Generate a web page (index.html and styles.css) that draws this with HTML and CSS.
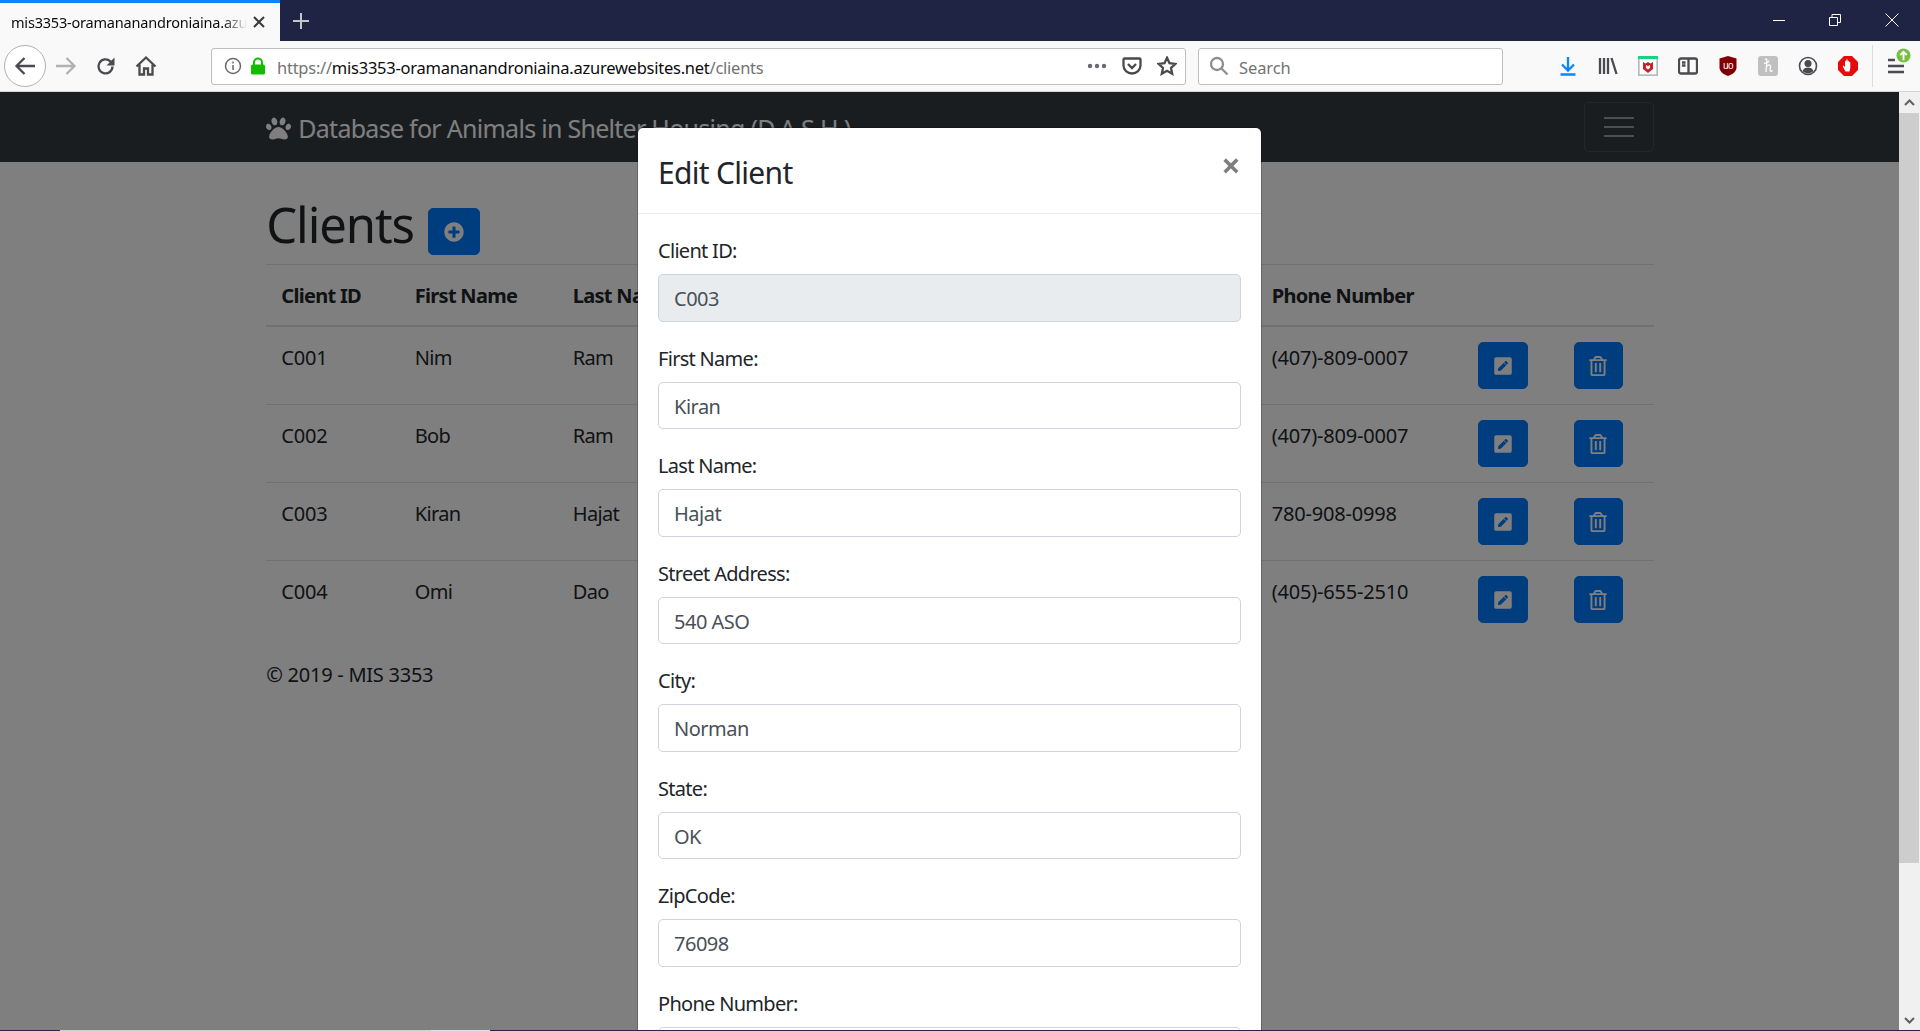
FILE: index.html
```html
<!DOCTYPE html>
<html>
    <head>
        <title>Clients - D.A.S.H.</title>
        <meta name="viewport" content="width=device-width, initial-scale=1">
        <link rel="stylesheet" href="styles.css">
    </head>
    <body>
        <svg class="defs" width="0" height="0">
            <symbol id="i-edit" viewBox="0 0 448 512"><path d="M400 480H48c-26.5 0-48-21.5-48-48V80c0-26.5 21.5-48 48-48h352c26.5 0 48 21.5 48 48v352c0 26.5-21.5 48-48 48zM238.1 177.9L102.4 313.6l-6.3 57.1c-.8 7.6 5.6 14.1 13.3 13.3l57.1-6.3L302.2 242c2.3-2.3 2.3-6.1 0-8.5L246.7 178c-2.5-2.4-6.3-2.4-8.6-.1zM345 165.1L314.9 135c-9.4-9.4-24.6-9.4-33.9 0l-23.1 23.1c-2.3 2.3-2.3 6.1 0 8.5l55.5 55.5c2.3 2.3 6.1 2.3 8.5 0L345 199c9.3-9.3 9.3-24.5 0-33.9z"/></symbol>
            <symbol id="i-trash" viewBox="0 0 448 512"><path d="M268 416h24a12 12 0 0 0 12-12V188a12 12 0 0 0-12-12h-24a12 12 0 0 0-12 12v216a12 12 0 0 0 12 12zM432 80h-82.41l-34-56.7A48 48 0 0 0 274.41 0H173.59a48 48 0 0 0-41.16 23.3L98.41 80H16A16 16 0 0 0 0 96v16a16 16 0 0 0 16 16h16v336a48 48 0 0 0 48 48h288a48 48 0 0 0 48-48V128h16a16 16 0 0 0 16-16V96a16 16 0 0 0-16-16zM171.84 50.91A6 6 0 0 1 177 48h94a6 6 0 0 1 5.15 2.91L293.61 80H154.39zM368 464H80V128h288zm-212-48h24a12 12 0 0 0 12-12V188a12 12 0 0 0-12-12h-24a12 12 0 0 0-12 12v216a12 12 0 0 0 12 12z"/></symbol>
        </svg>

        <div class="tabbar">
            <div class="tab">
                <span class="tab-title">mis3353-oramananandroniaina.azur</span>
                <svg class="tab-close" width="14" height="14" viewBox="0 0 14 14"><path d="M2 2l10 10M12 2L2 12"/></svg>
            </div>
            <div class="new-tab">
                <svg width="18" height="18" viewBox="0 0 18 18"><path d="M9 1v16M1 9h16"/></svg>
            </div>
            <div class="win-controls">
                <div class="win-btn"><svg width="14" height="14" viewBox="0 0 14 14"><path d="M1 7.5h12"/></svg></div>
                <div class="win-btn"><svg width="14" height="14" viewBox="0 0 14 14"><path d="M1.5 4.5h8v8h-8zM4 4.5v-3h8.5v8h-3"/></svg></div>
                <div class="win-btn"><svg width="14" height="14" viewBox="0 0 14 14"><path d="M.5.5l13 13M13.500.5l-13 13"/></svg></div>
            </div>
        </div>

        <div class="toolbar">
            <div class="back-btn">
                <svg width="22" height="22" viewBox="0 0 22 22"><path d="M21 11H2.500M10.500 3l-8 8 8 8"/></svg>
            </div>
            <div class="tool-slot forward">
                <svg width="22" height="22" viewBox="0 0 22 22"><path d="M1 11h18.500M11.500 3l8 8-8 8"/></svg>
            </div>
            <div class="tool-slot">
                <svg width="20" height="20" viewBox="0 0 20 20"><path d="M16.500 10.500a7 7 0 1 1-2.200-5.200l2.500 2.500"/><path class="solid" d="M18.500 1.500v8h-8z"/></svg>
            </div>
            <div class="tool-slot">
                <svg width="22" height="22" viewBox="0 0 22 22"><path d="M1.500 11.500L11 2.500l9.500 9M4.500 9.500v10h4.500v-6h4v6h4.500v-10"/></svg>
            </div>

            <div class="url-bar">
                <svg class="url-info" width="18" height="18" viewBox="0 0 18 18"><circle cx="9" cy="9" r="7.500"/><path d="M9 8v5M9 4.500v2"/></svg>
                <svg class="url-lock" width="16" height="18" viewBox="0 0 16 18"><path d="M4 8V5.500a4 4 0 0 1 8 0V8" fill="none" stroke="#12bc00" stroke-width="2"/><rect x="1" y="7.500" width="14" height="10" rx="1.500" fill="#12bc00"/></svg>
                <span class="url-text">https://<b>mis3353-oramananandroniaina.azurewebsites.net</b>/clients</span>
                <svg class="url-act" width="20" height="6" viewBox="0 0 20 6"><circle cx="3" cy="3" r="2.200"/><circle cx="10" cy="3" r="2.200"/><circle cx="17" cy="3" r="2.200"/></svg>
                <svg class="url-stroke" width="20" height="20" viewBox="0 0 20 20"><path d="M2.500 2.500h15a1 1 0 0 1 1 1v6a8.500 8 0 0 1-17 0v-6a1 1 0 0 1 1-1zM6 8l4 4 4-4"/></svg>
                <svg class="url-stroke" width="20" height="20" viewBox="0 0 20 20"><path d="M10 1.800l2.500 5.400 5.900.7-4.400 4 1.200 5.800-5.200-2.900-5.200 2.900 1.200-5.800-4.400-4 5.900-.7z"/></svg>
            </div>

            <div class="search-bar">
                <svg width="20" height="20" viewBox="0 0 20 20"><circle cx="8" cy="8" r="6"/><path d="M12.500 12.500l6 6"/></svg>
                <span>Search</span>
            </div>

            <div class="tool-slot first-addon">
                <svg class="blue" width="20" height="20" viewBox="0 0 20 20"><path d="M10 1v13M4 8.500l6 6 6-6M2.500 18.500h15"/></svg>
            </div>
            <div class="tool-slot">
                <svg width="20" height="20" viewBox="0 0 20 20"><path d="M2 2v16M6 2v16M10 2v16M13.500 2l5 16"/></svg>
            </div>
            <div class="tool-slot">
                <svg class="flat" width="20" height="20" viewBox="0 0 20 20"><rect x=".5" y=".5" width="19" height="19" fill="#fff" stroke="#b9b9b9"/><rect width="20" height="3" fill="#1ad17f"/><path d="M5 6l2.500 1.500L10 6l2.500 1.500L15 6v7l-5 4-5-4z" fill="#c8202a"/><path d="M8 9v3l2 1.500 2-1.500V9l-2 1.200z" fill="#fff"/></svg>
            </div>
            <div class="tool-slot">
                <svg width="20" height="20" viewBox="0 0 20 20"><rect x="1" y="2.500" width="18" height="15" rx="2"/><path d="M10.500 2.500v15M4 6.500h3.500M4 9.500h3.500"/></svg>
            </div>
            <div class="tool-slot">
                <svg class="flat" width="20" height="20" viewBox="0 0 20 20"><path d="M10 0l8.500 2.500v9c0 4-4 7-8.500 8.500-4.500-1.500-8.500-4.500-8.500-8.500v-9z" fill="#800000"/><text x="10" y="12.500" text-anchor="middle" font-size="10" font-family="Liberation Sans" fill="#fff">uo</text></svg>
            </div>
            <div class="tool-slot">
                <svg class="flat" width="20" height="20" viewBox="0 0 20 20"><rect width="20" height="20" rx="3" fill="#c0c0c0"/><path d="M7 3.500c1-1 2-.5 1.800 1L8 16M8.500 11c1-2.500 4-3 4 -.5 0 2-1 3.500 0 4.500 .7.500 1.500 0 2-.5M6 7c2 .5 5-.5 5-2.500" fill="none" stroke="#fff" stroke-width="1.300"/></svg>
            </div>
            <div class="tool-slot">
                <svg class="account" width="20" height="20" viewBox="0 0 20 20"><circle cx="10" cy="10" r="8.500"/><circle class="solid" cx="10" cy="7.500" r="3.500"/><path class="solid" d="M4.500 15c1-2.500 3-3.500 5.500-3.500s4.500 1 5.500 3.500c-1.500 1.500-3.500 2.500-5.500 2.500s-4-1-5.500-2.500z"/></svg>
            </div>
            <div class="tool-slot">
                <svg class="flat" width="20" height="20" viewBox="0 0 20 20"><path d="M6 0h8l6 6v8l-6 6H6l-6-6V6z" fill="#e60b0b"/><path d="M7.500 15.500L5 11c-.5-1 .8-1.500 1.300-.8l.7 1V5.500c0-1 1.300-1 1.300 0V4c0-1 1.400-1 1.400 0v1.500c0-1 1.300-1 1.300 0V6.500c0-1 1.300-1 1.300 0V12l-.8 3.500z" fill="#fff"/></svg>
            </div>
            <div class="tool-sep"></div>
            <div class="tool-slot menu-btn">
                <svg width="20" height="20" viewBox="0 0 20 20"><path d="M2 4h7M2 10h16M2 16h16"/></svg>
                <svg class="flat update-badge" width="15" height="15" viewBox="0 0 16 16"><circle cx="8" cy="8" r="7.500" fill="#74c043"/><path d="M8 13V4M4.500 7.500L8 4l3.500 3.500" fill="none" stroke="#fff" stroke-width="2"/></svg>
            </div>
        </div>

        <div class="viewport">
            <nav class="navbar">
                <div class="nav-inner">
                    <a class="brand">
                        <svg class="paw" width="25" height="25" viewBox="0 0 512 512"><path d="M256 224c-79.41 0-192 122.76-192 200.25 0 34.9 26.81 55.75 71.74 55.75 48.84 0 81.09-25.08 120.26-25.08 39.51 0 71.85 25.08 120.26 25.08 44.93 0 71.74-20.85 71.74-55.75C448 346.76 335.41 224 256 224zm-147.28-12.61c-10.4-34.65-42.44-57.09-71.56-50.13-29.12 6.96-44.29 40.69-33.89 75.34 10.4 34.65 42.44 57.09 71.56 50.13 29.12-6.96 44.29-40.69 33.89-75.34zm84.72-20.78c30.94-8.14 46.42-49.94 34.58-93.36s-46.52-72.01-77.46-63.87-46.42 49.94-34.58 93.36c11.84 43.42 46.52 72.02 77.46 63.87zm281.39-29.34c-29.12-6.96-61.15 15.48-71.56 50.13-10.4 34.65 4.77 68.38 33.89 75.34 29.12 6.96 61.15-15.48 71.56-50.13 10.4-34.65-4.77-68.38-33.89-75.34zm-156.27 29.34c30.94 8.14 65.62-20.45 77.46-63.87 11.84-43.42-3.64-85.21-34.58-93.36s-65.62 20.45-77.46 63.87c-11.84 43.42 3.64 85.22 34.58 93.36z"/></svg>
                        Database for Animals in Shelter Housing (D.A.S.H.)
                    </a>
                    <button class="toggler"><span></span><span></span><span></span></button>
                </div>
            </nav>

            <main class="container">
                <div class="page-head">
                    <h1>Clients</h1>
                    <button class="btn">
                        <svg width="20" height="20" viewBox="0 0 512 512"><path d="M256 8C119 8 8 119 8 256s111 248 248 248 248-111 248-248S393 8 256 8zm144 276c0 6.6-5.4 12-12 12h-92v92c0 6.6-5.4 12-12 12h-56c-6.6 0-12-5.4-12-12v-92h-92c-6.6 0-12-5.4-12-12v-56c0-6.6 5.4-12 12-12h92v-92c0-6.6 5.4-12 12-12h56c6.6 0 12 5.4 12 12v92h92c6.6 0 12 5.4 12 12v56z"/></svg>
                    </button>
                </div>

                <table class="clients">
                    <colgroup>
                        <col class="c-id"><col class="c-first"><col class="c-last"><col class="c-phone"><col class="c-edit"><col class="c-del">
                    </colgroup>
                    <thead>
                        <tr><th>Client ID</th><th>First Name</th><th>Last Name</th><th>Phone Number</th><th></th><th></th></tr>
                    </thead>
                    <tbody>
                        <tr>
                            <td class="num">C001</td><td>Nim</td><td>Ram</td><td class="num">(407)-809-0007</td>
                            <td class="act"><button class="btn"><svg width="20" height="20"><use href="#i-edit"/></svg></button></td>
                            <td class="act"><button class="btn btn-del"><svg width="20" height="20"><use href="#i-trash"/></svg></button></td>
                        </tr>
                        <tr>
                            <td class="num">C002</td><td>Bob</td><td>Ram</td><td class="num">(407)-809-0007</td>
                            <td class="act"><button class="btn"><svg width="20" height="20"><use href="#i-edit"/></svg></button></td>
                            <td class="act"><button class="btn btn-del"><svg width="20" height="20"><use href="#i-trash"/></svg></button></td>
                        </tr>
                        <tr>
                            <td class="num">C003</td><td>Kiran</td><td>Hajat</td><td class="num">780-908-0998</td>
                            <td class="act"><button class="btn"><svg width="20" height="20"><use href="#i-edit"/></svg></button></td>
                            <td class="act"><button class="btn btn-del"><svg width="20" height="20"><use href="#i-trash"/></svg></button></td>
                        </tr>
                        <tr>
                            <td class="num">C004</td><td>Omi</td><td>Dao</td><td class="num">(405)-655-2510</td>
                            <td class="act"><button class="btn"><svg width="20" height="20"><use href="#i-edit"/></svg></button></td>
                            <td class="act"><button class="btn btn-del"><svg width="20" height="20"><use href="#i-trash"/></svg></button></td>
                        </tr>
                    </tbody>
                </table>

                <footer class="page-foot">&copy; 2019 - MIS 3353</footer>
            </main>

            <div class="modal-layer">
                <div class="modal-scroll">
                    <div class="modal">
                        <div class="modal-header">
                            <h4>Edit Client</h4>
                            <span class="modal-close">&times;</span>
                        </div>
                        <form class="modal-body">
                            <div class="form-group">
                                <label>Client ID:</label>
                                <input class="form-control" value="C003" readonly>
                            </div>
                            <div class="form-group">
                                <label>First Name:</label>
                                <input class="form-control" value="Kiran">
                            </div>
                            <div class="form-group">
                                <label>Last Name:</label>
                                <input class="form-control" value="Hajat">
                            </div>
                            <div class="form-group">
                                <label>Street Address:</label>
                                <input class="form-control" value="540 ASO">
                            </div>
                            <div class="form-group">
                                <label>City:</label>
                                <input class="form-control" value="Norman">
                            </div>
                            <div class="form-group">
                                <label>State:</label>
                                <input class="form-control" value="OK">
                            </div>
                            <div class="form-group">
                                <label>ZipCode:</label>
                                <input class="form-control" value="76098">
                            </div>
                            <div class="form-group">
                                <label>Phone Number:</label>
                                <input class="form-control">
                            </div>
                        </form>
                    </div>
                </div>
                <div class="scrollbar">
                    <svg width="21" height="21" viewBox="0 0 21 21"><path d="M6 13l4.500-4.500L15 13"/></svg>
                    <div class="scroll-track"><div class="scroll-thumb"></div></div>
                    <svg width="21" height="20" viewBox="0 0 21 20"><path d="M6 8l4.500 4.500L15 8"/></svg>
                </div>
            </div>
        </div>

        <div class="taskbar"><div class="task-item"></div><div class="task-item active"></div></div>
    </body>
</html>
```

FILE: styles.css
```css
* {
    box-sizing: border-box;
}

html, body {
    height: 100%;
    margin: 0;
}

body {
    display: flex;
    flex-direction: column;
    overflow: hidden;
    font-family: "Noto Sans", "Open Sans", sans-serif;
    font-size: 20px;
    line-height: 30px;
    letter-spacing: -0.65px;
    color: #212529;
    background-color: #fff;
}

.defs {
    position: absolute;
}

/* browser chrome */
.tabbar {
    display: flex;
    height: 41px;
    flex: none;
    background-color: #1f2444;
}

.tab {
    display: flex;
    align-items: center;
    width: 280px;
    padding: 0 0 1px 11px;
    border-top: 3px solid #0a84ff;
    background-color: #f9f9fa;
}

.tab-title {
    flex: none;
    width: 241px;
    white-space: nowrap;
    font-size: 14.500px;
    letter-spacing: -0.2px;
    color: #0c0c0d;
    -webkit-mask-image: linear-gradient(to right, #000 88%, transparent 98%);
    mask-image: linear-gradient(to right, #000 88%, transparent 98%);
}

.tab-close {
    flex: none;
    fill: none;
    stroke: #3a3a3c;
    stroke-width: 2;
}

.new-tab {
    display: flex;
    align-items: center;
    justify-content: center;
    width: 42px;
    fill: none;
    stroke: #c4c5cc;
    stroke-width: 2;
}

.win-controls {
    display: flex;
    margin-left: auto;
}

.win-btn {
    display: flex;
    align-items: center;
    justify-content: center;
    width: 56.5px;
    padding-bottom: 2px;
    fill: none;
    stroke: #fff;
    stroke-width: 1;
}

.toolbar {
    display: flex;
    align-items: center;
    height: 51px;
    flex: none;
    padding-left: 4px;
    border-bottom: 1px solid #d4d4d4;
    background-color: #f9f9fa;
}

.toolbar svg {
    fill: none;
    stroke: #4a4a4f;
    stroke-width: 2.300;
}

.toolbar svg.flat {
    stroke: none;
}

.toolbar svg.account {
    stroke-width: 1.600;
}

.toolbar svg .solid {
    fill: #4a4a4f;
    stroke: none;
}

.back-btn {
    display: flex;
    align-items: center;
    justify-content: center;
    width: 42px;
    height: 42px;
    border: 1px solid #b1b1b3;
    border-radius: 50%;
    background-color: #fff;
}

.tool-slot {
    position: relative;
    display: flex;
    align-items: center;
    justify-content: center;
    width: 40px;
    height: 40px;
    flex: none;
}

.toolbar .forward svg {
    stroke: #b1b1b3;
}

.url-bar, .search-bar {
    display: flex;
    align-items: center;
    height: 37px;
    border: 1px solid #bebebe;
    border-radius: 3px;
    background-color: #fff;
}

.url-bar {
    width: 975px;
    margin-left: 45px;
    padding: 0 8px 0 12px;
}

.toolbar .url-info {
    stroke: #6a6a6e;
    stroke-width: 1.500;
    flex: none;
}

.toolbar .url-lock {
    margin-left: 8px;
    flex: none;
    stroke: none;
}

.url-text {
    flex: 1;
    margin-left: 11px;
    padding-top: 3px;
    font-size: 16.500px;
    letter-spacing: -0.25px;
    color: #737373;
    white-space: nowrap;
}

.url-text b {
    font-weight: normal;
    color: #0c0c0d;
}

.toolbar .url-act {
    fill: #6a6a6e;
    stroke: none;
}

.url-stroke {
    margin-left: 15px;
}

.search-bar {
    width: 305px;
    margin-left: 12px;
    padding-left: 10px;
    font-size: 16.500px;
    letter-spacing: -0.1px;
    color: #737373;
}

.search-bar span {
    margin-left: 10px;
    padding-top: 3px;
}

.toolbar .search-bar svg {
    stroke: #8e8e90;
}

.first-addon {
    margin-left: 45px;
}

.toolbar .blue {
    stroke: #0a84ff;
}

.tool-sep {
    width: 1px;
    height: 42px;
    margin-left: 4px;
    background-color: #dcdcdc;
}

.menu-btn {
    width: 46px;
}

.update-badge {
    position: absolute;
    top: 2px;
    right: 8px;
}

/* page behind the dialog */
.viewport {
    position: relative;
    flex: 1;
    min-height: 0;
    overflow: hidden;
}

.navbar {
    height: 70px;
    background-color: #343a40;
}

.nav-inner, .container {
    width: 1387.500px;
    margin: 0 auto;
}

.nav-inner {
    display: flex;
    align-items: center;
    justify-content: space-between;
    height: 100%;
}

.brand {
    display: flex;
    align-items: center;
    gap: 7px;
    padding-top: 2px;
    font-size: 25px;
    line-height: 38px;
    letter-spacing: -0.72px;
    color: #fff;
    white-space: nowrap;
}

.paw {
    fill: #fff;
}

.toggler {
    display: flex;
    flex-direction: column;
    align-items: center;
    justify-content: center;
    gap: 7px;
    width: 69.500px;
    height: 49.500px;
    padding: 0;
    border: 1px solid rgba(255, 255, 255, 0.1);
    border-radius: 5px;
    background: none;
}

.toggler span {
    width: 30px;
    height: 2px;
    background-color: rgba(255, 255, 255, 0.5);
}

.page-head {
    display: flex;
    align-items: center;
    gap: 14px;
    height: 102px;
    padding-top: 22px;
}

.page-head h1 {
    margin: 0;
    font-size: 49px;
    font-weight: 400;
    line-height: 60px;
    letter-spacing: -1.1px;
}

.btn {
    display: inline-flex;
    align-items: center;
    justify-content: center;
    width: 50px;
    height: 47px;
    padding: 0;
    border: 1px solid #007bff;
    border-radius: 5px;
    vertical-align: top;
    background-color: #007bff;
    fill: #fff;
}

.page-head .btn {
    width: 52px;
    margin-top: 15px;
}

.btn-del {
    width: 49px;
}

.clients {
    width: 100%;
    border-collapse: collapse;
    table-layout: fixed;
    margin-bottom: 22px;
}

.c-id { width: 133.500px; }
.c-first { width: 158px; }
.c-last { width: 699px; }
.c-phone { width: 206px; }
.c-edit { width: 96px; }
.c-del { width: 95px; }

.clients th, .clients td {
    padding: 16px 15px 14px;
    border-top: 1px solid #dee2e6;
    text-align: left;
    vertical-align: top;
}

.clients th {
    font-weight: 700;
    letter-spacing: -0.7px;
    border-bottom: 2px solid #dee2e6;
}

.clients .num {
    letter-spacing: -0.2px;
}

.clients .act {
    padding: 15px;
}

.page-foot {
    letter-spacing: -0.25px;
}

/* modal */
.modal-layer {
    position: absolute;
    inset: 0;
    display: flex;
    background-color: rgba(0, 0, 0, 0.5);
}

.modal-scroll {
    flex: 1;
    min-width: 0;
    padding-top: 35px;
}

.modal {
    width: 625px;
    margin: 0 auto;
    border: 1px solid rgba(0, 0, 0, 0.2);
    border-radius: 6px;
    background-color: #fff;
    background-clip: padding-box;
}

.modal-header {
    display: flex;
    justify-content: space-between;
    padding: 22px 20px 18px;
    border-bottom: 1px solid #e9ecef;
}

.modal-header h4 {
    margin: 0;
    font-size: 30px;
    font-weight: 400;
    line-height: 45px;
    letter-spacing: -0.7px;
}

.modal-close {
    margin-right: 1px;
    font-size: 34px;
    font-weight: 700;
    line-height: 31px;
    color: #000;
    opacity: 0.5;
}

.modal-body {
    padding: 20px;
}

.form-group {
    margin-bottom: 20px;
}

.form-group label {
    display: block;
    padding-top: 2px;
    margin-bottom: 8px;
    letter-spacing: -0.7px;
}

.form-control {
    display: block;
    width: 100%;
    height: 47.500px;
    padding: 8.500px 15px 6.500px;
    border: 1px solid #ced4da;
    border-radius: 5px;
    font: inherit;
    letter-spacing: -0.5px;
    color: #495057;
    background-color: #fff;
}

.form-control[readonly] {
    background-color: #e9ecef;
}

.scrollbar {
    display: flex;
    flex-direction: column;
    width: 21px;
    flex: none;
    background-color: #f0f0f0;
}

.scrollbar svg {
    flex: none;
    fill: none;
    stroke: #606060;
    stroke-width: 2;
}

.scroll-track {
    flex: 1;
}

.scroll-thumb {
    height: 750px;
    margin: 0 1px 0 0;
    background-color: #cdcdcd;
}

.taskbar {
    display: flex;
    height: 1px;
    flex: none;
    padding-left: 60px;
    background-color: #3c1a4d;
}

.task-item {
    width: 370px;
    background-color: #cfcfcf;
}

.task-item.active {
    width: 60px;
    background-color: #e4d9e6;
}
```
